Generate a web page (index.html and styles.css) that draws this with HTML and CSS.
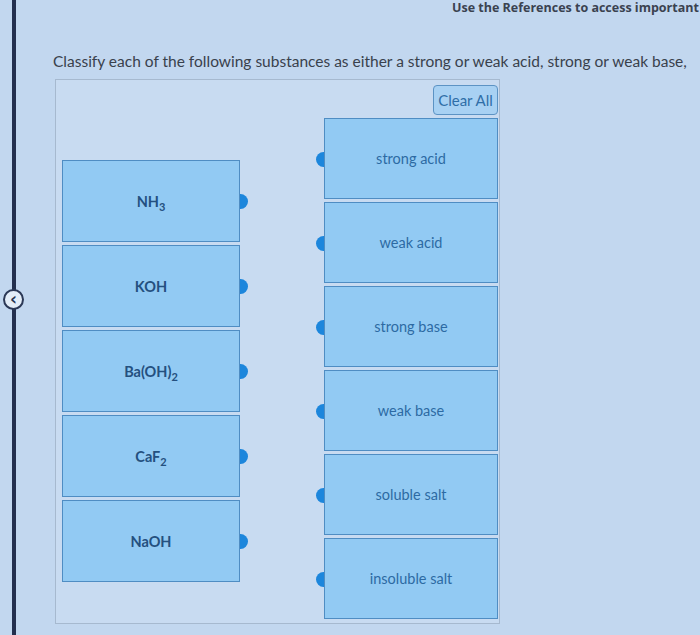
FILE: index.html
```html
<!DOCTYPE html>
<html>
<head>
<meta charset="utf-8">
<link rel="stylesheet" href="styles.css">
</head>
<body>
<div class="page">
  <div class="gutter"></div>
  <div class="rail">
    <button class="collapse" aria-label="collapse">&lsaquo;</button>
  </div>
  <main class="content">
    <div class="refs">Use the References to access important</div>
    <p class="question">Classify each of the following substances as either a strong or weak acid, strong or weak base,</p>
    <div class="board">
      <div class="board-head">
        <button class="clear">Clear All</button>
      </div>
      <div class="columns">
        <div class="col col-left">
          <div class="item src"><b>NH<sub>3</sub></b><span class="tab"></span></div>
          <div class="item src"><b>KOH</b><span class="tab"></span></div>
          <div class="item src"><b>Ba(OH)<sub>2</sub></b><span class="tab"></span></div>
          <div class="item src"><b>CaF<sub>2</sub></b><span class="tab"></span></div>
          <div class="item src"><b>NaOH</b><span class="tab"></span></div>
        </div>
        <div class="col col-right">
          <div class="item dst"><span class="tab"></span>strong acid</div>
          <div class="item dst"><span class="tab"></span>weak acid</div>
          <div class="item dst"><span class="tab"></span>strong base</div>
          <div class="item dst"><span class="tab"></span>weak base</div>
          <div class="item dst"><span class="tab"></span>soluble salt</div>
          <div class="item dst"><span class="tab"></span>insoluble salt</div>
        </div>
      </div>
    </div>
  </main>
</div>
</body>
</html>
```

FILE: styles.css
```css
html, body {
  margin: 0;
  padding: 0;
  height: 100%;
  overflow: hidden;
}
body {
  background: #c2d7ef;
  font-family: Lato, "Open Sans", "DejaVu Sans", sans-serif;
  color: #333a44;
}
.page {
  display: flex;
  height: 635px;
}
.gutter {
  width: 12px;
  flex: none;
}
.rail {
  width: 4px;
  flex: none;
  background: #232f4e;
  position: relative;
}
.collapse {
  position: absolute;
  left: -9px;
  top: 289px;
  width: 21px;
  height: 21px;
  border-radius: 50%;
  border: 2px solid #2b3856;
  background: #e3edf8;
  color: #263250;
  font: bold 17px/15px "DejaVu Sans", sans-serif;
  padding: 0;
  text-align: center;
}
.content {
  flex: 1;
  min-width: 0;
  padding-left: 37px;
}
.refs {
  margin: 0 0 0 399px;
  white-space: nowrap;
  font-family: "Open Sans", sans-serif;
  font-weight: 700;
  font-size: 12.5px;
  color: #3a4250;
  line-height: 15px;
}
.question {
  margin: 36px 0 0 0;
  white-space: nowrap;
  font-size: 15.5px;
  line-height: 20px;
  color: #39414c;
}
.board {
  margin: 8px 0 0 2px;
  width: 445px;
  height: 545px;
  border: 1px solid #a6b9cf;
  background: #c8dbf1;
  box-sizing: border-box;
  padding: 5px 1px 0 6px;
}
.board-head {
  display: flex;
  justify-content: flex-end;
}
.clear {
  width: 65px;
  height: 30px;
  border: 1px solid #5c93c4;
  border-radius: 4px;
  background: #a8d1f3;
  color: #2f6ea7;
  font-family: Lato, "Open Sans", sans-serif;
  font-size: 15px;
  padding: 0;
}
.columns {
  display: flex;
  justify-content: space-between;
}
.col {
  display: flex;
  flex-direction: column;
  gap: 3px;
}
.col-left {
  width: 178px;
  margin-top: 45px;
}
.col-right {
  width: 174px;
  margin-top: 3px;
}
.item {
  position: relative;
  box-sizing: border-box;
  border: 1px solid #4f8dc3;
  background: #92caf3;
  display: flex;
  align-items: center;
  justify-content: center;
  font-size: 14.5px;
  color: #2d6aa3;
}
.src {
  height: 82px;
  color: #24507f;
}
.src b {
  font-weight: 700;
  font-size: 14.5px;
}
.src sub {
  font-size: 11px;
  vertical-align: -4px;
  line-height: 0;
}
.dst {
  height: 81px;
}
.tab {
  position: absolute;
  top: 50%;
  width: 8px;
  height: 15px;
  margin-top: -7px;
  background: #1c86dc;
}
.src .tab {
  right: -9px;
  border-radius: 0 8px 8px 0;
}
.dst .tab {
  left: -9px;
  border-radius: 8px 0 0 8px;
}
```
